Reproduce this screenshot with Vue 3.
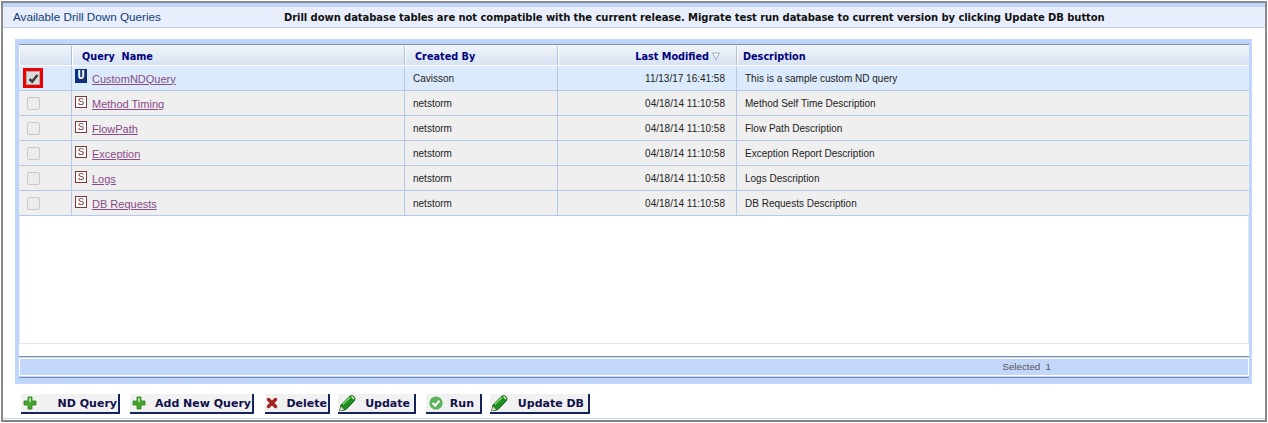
<script setup>
const rows = [
  { t: 'U', name: 'CustomNDQuery', by: 'Cavisson', date: '11/13/17 16:41:58', desc: 'This is a sample custom ND query', sel: true },
  { t: 'S', name: 'Method Timing', by: 'netstorm', date: '04/18/14 11:10:58', desc: 'Method Self Time Description' },
  { t: 'S', name: 'FlowPath', by: 'netstorm', date: '04/18/14 11:10:58', desc: 'Flow Path Description' },
  { t: 'S', name: 'Exception', by: 'netstorm', date: '04/18/14 11:10:58', desc: 'Exception Report Description' },
  { t: 'S', name: 'Logs', by: 'netstorm', date: '04/18/14 11:10:58', desc: 'Logs Description' },
  { t: 'S', name: 'DB Requests', by: 'netstorm', date: '04/18/14 11:10:58', desc: 'DB Requests Description' },
]
const buttons = [
  { label: 'ND Query', icon: 'plus', w: 99, after: 10, pl: 2, pr: 1 },
  { label: 'Add New Query', icon: 'plus', w: 124, after: 11, pl: 2, pr: 1 },
  { label: 'Delete', icon: 'x', w: 65, after: 8, pl: 1, pr: 1 },
  { label: 'Update', icon: 'pencil', w: 78, after: 10, pl: 1, pr: 4 },
  { label: 'Run', icon: 'check', w: 56, after: 8, pl: 3, pr: 6 },
  { label: 'Update DB', icon: 'pencil', w: 100, after: 0, pl: 1, pr: 4 },
]
</script>

<template>
  <div class="win">
    <div class="topband">
      <div class="titlebar">
        <span class="title">Available Drill Down Queries</span>
        <span class="msg">Drill down database tables are not compatible with the current release. Migrate test run database to current version by clicking Update DB button</span>
      </div>
    </div>
    <div class="panel">
      <div class="table">
        <div class="row head">
          <div class="c c1"></div>
          <div class="c c2"><span class="qn">Query&nbsp; Name</span></div>
          <div class="c c3">Created By</div>
          <div class="c c4">Last Modified
            <svg class="sort" width="8" height="8" viewBox="0 0 8 8"><path d="M0.5 1H7.5L4 7.5Z" fill="#f4f7fb" stroke="#8d97a8" stroke-width="0.8"/></svg>
          </div>
          <div class="c c5">Description</div>
        </div>
        <div v-for="r in rows" :key="r.name" class="row body" :class="{ sel: r.sel }">
          <div class="c c1">
            <span class="cb" :class="{ on: r.sel }">
              <svg v-if="r.sel" width="11" height="11" viewBox="0 0 11 11"><path d="M1.5 6L4.2 8.6L9.5 2" fill="none" stroke="#3d3d3d" stroke-width="2.5"/></svg>
            </span>
          </div>
          <div class="c c2">
            <span class="badge" :class="r.t === 'U' ? 'u' : 's'">{{ r.t }}</span>
            <a class="link">{{ r.name }}</a>
          </div>
          <div class="c c3">{{ r.by }}</div>
          <div class="c c4">{{ r.date }}</div>
          <div class="c c5">{{ r.desc }}</div>
        </div>
        <div class="empty"></div>
      </div>
      <div class="foot"><div class="foot-in">Selected&nbsp; 1</div></div>
    </div>
    <div class="btns">
      <button v-for="b in buttons" :key="b.label + b.w" class="btn"
        :style="{ width: b.w + 'px', marginRight: b.after + 'px', paddingLeft: b.pl + 'px', paddingRight: b.pr + 'px' }">
        <svg v-if="b.icon === 'plus'" width="14" height="14" viewBox="0 0 14 14"><path d="M5 1H9V5H13V9H9V13H5V9H1V5H5Z" fill="#46a62c" stroke="#2f7d22" stroke-width="0.8"/><path d="M6 2H8V6H6Z" fill="#a5e08e"/></svg>
        <svg v-else-if="b.icon === 'x'" width="12" height="12" viewBox="0 0 12 12"><path d="M2.5 2.5L9.5 9.5M9.5 2.5L2.5 9.5" stroke="#a32222" stroke-width="3.4" stroke-linecap="round"/></svg>
        <svg v-else-if="b.icon === 'pencil'" width="17" height="18" viewBox="0 0 17 18"><path d="M0.8 16.8L2 11L10 2.8C11.4 1.4 13.6 1.2 15 2.6C16.4 4 16.2 6 14.8 7.4L6.8 15.6Z" fill="#1f8f22" stroke="#0e4f12" stroke-width="1"/><path d="M3.6 10.5L10.8 3.4" stroke="#7fdc70" stroke-width="1.6"/><path d="M12.5 2.2L15.2 5" stroke="#d8f5cf" stroke-width="1.4"/><path d="M0.8 16.8L1.8 12.6L5 15.8Z" fill="#e8e2c4"/></svg>
        <svg v-else width="14" height="14" viewBox="0 0 14 14"><circle cx="7" cy="7" r="6.6" fill="#5cb25a"/><path d="M3.6 7L6.2 9.6L10.4 4.6" fill="none" stroke="#fff" stroke-width="2.2"/></svg>
        <span class="blabel">{{ b.label }}</span>
      </button>
    </div>
  </div>
</template>

<style>
html, body { margin: 0; background: #fff; }
</style>

<style scoped>
.win {
  box-sizing: border-box;
  width: 1266px;
  height: 421px;
  margin: 1px 0 0 1px;
  border: 2px solid #8b8b8b;
  border-bottom-color: #808080;
  background: #fff;
  position: relative;
  overflow: hidden;
}
.win::after {
  content: "";
  display: block;
  height: 1px;
  background: #c3d6f5;
  margin-top: 4px;
}
.topband {
  border-top: 4px solid #bfd5fb;
}
.titlebar {
  box-sizing: border-box;
  height: 21px;
  background: #e8eefb;
  border-bottom: 1px solid #bccfe9;
  display: flex;
  align-items: center;
}
.title {
  font: 11.7px "Liberation Sans", Arial, sans-serif;
  color: #0f3c7a;
  margin-left: 10px;
  width: 271px;
  white-space: nowrap;
  padding-bottom: 1px;
}
.msg {
  font: bold 10px "DejaVu Sans", Verdana, sans-serif;
  letter-spacing: -0.07px;
  color: #111;
  white-space: nowrap;
}
.panel {
  box-sizing: border-box;
  margin: 11px 0 0 12px;
  width: 1237px;
  height: 345px;
  background: #bfd5fb;
  padding: 5px 3px 6px 4px;
}
.table {
  box-sizing: border-box;
  height: 312px;
  background: #fff;
  border-top: 1px solid #7f8ea8;
}
.row {
  display: grid;
  grid-template-columns: 53px 333px 153px 179px 1fr;
  box-sizing: border-box;
}
.head {
  height: 21px;
  background: linear-gradient(#f0f4fa, #d7e2f1);
  border-top: 1px solid #f4f7fd;
  border-bottom: 1px solid #fff;
  font: bold 9.7px "DejaVu Sans", Verdana, sans-serif;
  color: #00007c;
}
.head .c { border-right: 1px solid #aebfd6; border-left: 1px solid #fff; padding-left: 5px; padding-top: 1px; }
.head .c2 { padding-left: 9px; }
.head .c4 { justify-content: flex-end; padding-right: 27px; position: relative; }
.sort { position: absolute; right: 16px; top: 6px; }
.head .c3 { padding-left: 9px; }
.head .c5 { padding-left: 5px; border-right: none; }
.c {
  display: flex;
  align-items: center;
  box-sizing: border-box;
  white-space: nowrap;
  min-width: 0;
}
.body {
  height: 25px;
  background: #efefef;
  border-bottom: 1px solid #b5c8e6;
  font: 10px "Liberation Sans", Arial, sans-serif;
  color: #222;
}
.body.sel { background: #dbebfb; }
.body .c { border-right: 1px solid #b5c8e6; }
.body .c5 { border-right: none; padding-left: 8px; }
.body .c3 { padding-left: 8px; }
.body .c4 { justify-content: flex-end; padding-right: 11px; }
.body .c1 { padding-left: 8px; }
.body .c2 { padding-left: 3px; }
.cb {
  box-sizing: border-box;
  width: 13px;
  height: 13px;
  border: 1px solid #c9c9c9;
  border-radius: 2px;
  background: #ececec;
  display: flex;
  align-items: center;
  justify-content: center;
}
.cb.on {
  width: 14px;
  height: 14px;
  margin-left: -1px;
  background: #dcdcdc;
  border-color: #aaa;
  border-radius: 0;
  outline: 3px solid #f00000;
}
.badge {
  box-sizing: border-box;
  width: 12px;
  height: 12px;
  font: 11px/10px "Liberation Mono", monospace;
  text-align: center;
  margin-right: 5px;
  margin-top: -3px;
}
.badge.s { border: 1px solid #7a3a3a; color: #7a3a3a; background: #fff; }
.badge.u { height: 14px; margin-top: -4px; background: #0f2f78; color: #fff; border: 1px solid #0f2f78; font-weight: bold; font-size: 12px; line-height: 12px; }
.link {
  font: 11px "Liberation Sans", Arial, sans-serif;
  color: #8a4a88;
  text-decoration: underline;
  padding-top: 1px;
}
.empty {
  box-sizing: border-box;
  height: 128px;
  border-left: 1px solid #dfe7f3;
  border-right: 1px solid #dfe7f3;
  border-bottom: 1px solid #dfe7f3;
}
.foot {
  box-sizing: border-box;
  height: 22px;
  border-top: 1px solid #7f8ea8;
  border-bottom: 1px solid #7f8ea8;
  background: #bfd5fb;
  padding: 1px 0;
}
.foot-in {
  box-sizing: border-box;
  height: 100%;
  border: 1px solid #fff;
  background: #c3d7fb;
  font: 9.7px "Liberation Sans", Arial, sans-serif;
  color: #555;
  text-align: right;
  padding-right: 197px;
  line-height: 16px;
}
.btns {
  display: flex;
  margin: 10px 0 0 18px;
}
.btn {
  box-sizing: border-box;
  height: 20px;
  padding: 0;
  background: #f1f1f1;
  border: none;
  border-right: 2px solid #16245c;
  border-bottom: 2px solid #16245c;
  display: flex;
  align-items: center;
  font: bold 11px "DejaVu Sans", Verdana, sans-serif;
  color: #10104a;
}
.blabel { margin-left: auto; }
</style>
